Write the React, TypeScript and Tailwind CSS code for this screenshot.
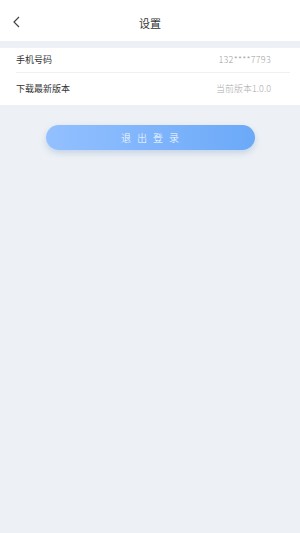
import React from "react";

export default function App() {
  return (
    <div className="w-[300px] h-[533px] bg-[#edf1f5] flex flex-col" style={{ fontFamily: '"Noto Sans CJK SC", "Noto Sans", sans-serif' }}>
      <div className="h-[41px] bg-white flex items-center relative">
        <svg className="absolute left-[12px] top-[16px]" width="10" height="12" viewBox="0 0 10 12">
          <path d="M7 1 L2 6 L7 11" stroke="#444" strokeWidth="1.2" fill="none" />
        </svg>
        <div className="w-full text-center text-[11px] text-[#333] mt-[5px]">设置</div>
      </div>
      <div className="h-[7px]" />
      <div className="bg-white">
        <div className="h-[25px] ml-[16px] mr-[10px] pr-[19px] flex items-center justify-between border-b border-[#eef0f3]">
          <span className="text-[9px] text-[#333]">手机号码</span>
          <span className="text-[9px] text-[#a0a0a0] font-light tracking-[0.03em]">132****7793</span>
        </div>
        <div className="h-[32px] pl-[16px] pr-[29px] flex items-center justify-between">
          <span className="text-[9px] text-[#333]">下载最新版本</span>
          <span className="text-[9px] text-[#aaa] font-light">当前版本1.0.0</span>
        </div>
      </div>
      <div className="flex justify-center mt-[20px]">
        <div className="w-[209px] h-[25px] rounded-full bg-gradient-to-r from-[#93c0ff] to-[#6ba9f8] shadow-[0_3px_6px_rgba(100,140,200,0.3)] flex items-center justify-center text-white text-[10px] font-light tracking-[0.6em] pl-[6px]">
          退出登录
        </div>
      </div>
    </div>
  );
}
